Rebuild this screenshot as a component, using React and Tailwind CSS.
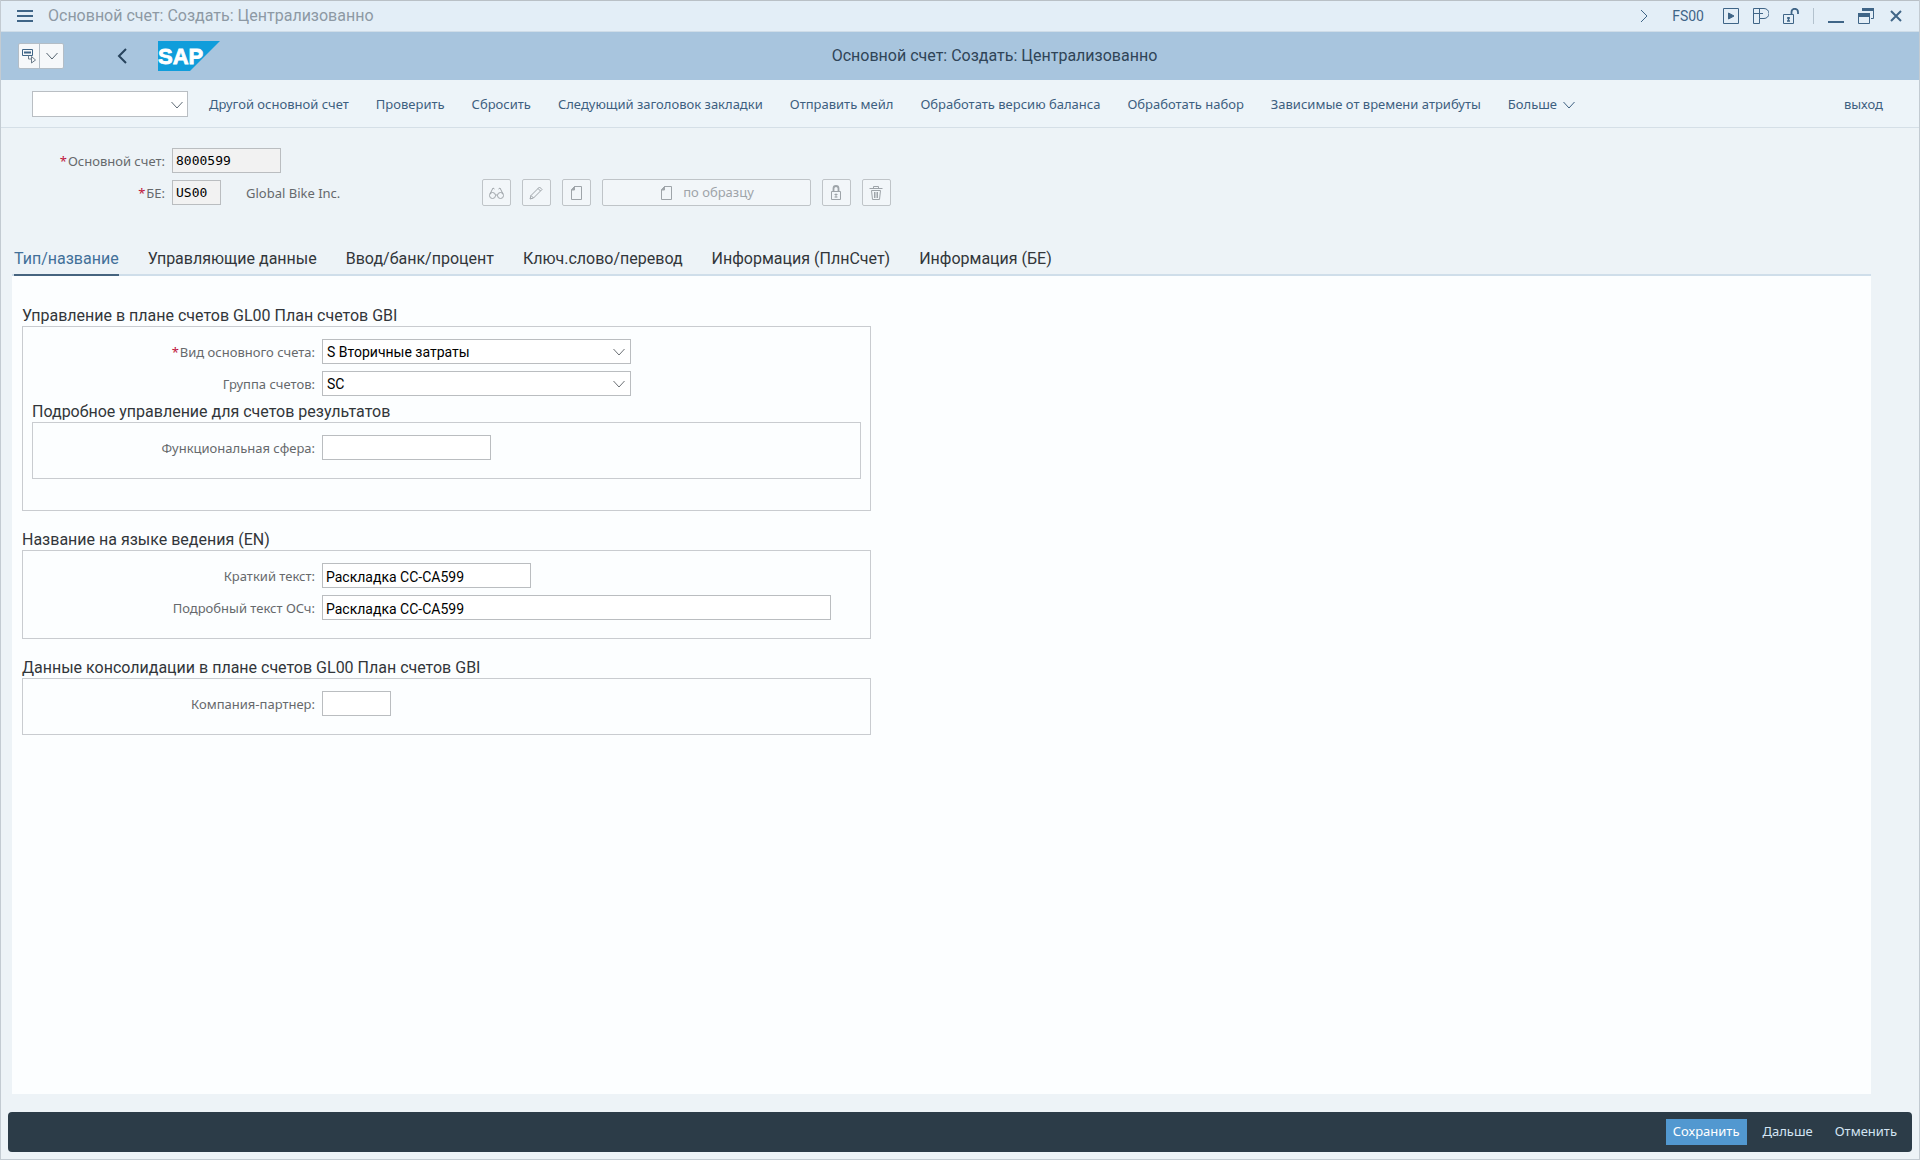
import React from 'react';
import clsx from 'clsx';

const menuItems = [
  'Другой основной счет',
  'Проверить',
  'Сбросить',
  'Следующий заголовок закладки',
  'Отправить мейл',
  'Обработать версию баланса',
  'Обработать набор',
  'Зависимые от времени атрибуты',
];

const tabs = [
  'Тип/название',
  'Управляющие данные',
  'Ввод/банк/процент',
  'Ключ.слово/перевод',
  'Информация (ПлнСчет)',
  'Информация (БЕ)',
];

function Icon({ className, children, size = 16, width = 1 }) {
  return (
    <svg
      className={clsx('shrink-0', className)}
      width={size}
      height={size}
      viewBox={`0 0 ${size} ${size}`}
      fill="none"
      stroke="currentColor"
      strokeWidth={width}
      aria-hidden="true"
    >
      {children}
    </svg>
  );
}

function ChevronDown({ className }) {
  return (
    <Icon size={12} className={className}>
      <path d="M0.5 3l5.5 6 5.5-6" />
    </Icon>
  );
}

function PageIcon() {
  return (
    <Icon>
      <path d="M5.5 1.5h7v13h-10V5z" />
      <path d="M2.5 5l3-3.5V5z" fill="currentColor" />
    </Icon>
  );
}

function SapLogo() {
  return (
    <svg width="62" height="30" viewBox="0 0 62 30" role="img" aria-label="SAP">
      <path d="M0 0h62L32 30H0z" fill="#0f9ddb" />
      <text x="0" y="23" fill="#fff" fontFamily="Liberation Sans, sans-serif" fontWeight="700" fontSize="22" stroke="#fff" strokeWidth="0.8">
        SAP
      </text>
    </svg>
  );
}

function TitleBar() {
  return (
    <div className="flex h-8 items-center border-t border-b border-t-[#b9c0c6] border-b-[#cfdde8] bg-[#e3eef7] pl-4 pr-[15px] text-[#3f6587]">
      <button type="button" aria-label="Меню">
        <Icon width={2}>
          <path d="M0 3h16M0 8h16M0 13h16" />
        </Icon>
      </button>
      <span className="ml-[15px] text-base leading-6 text-[#8d99a4]">Основной счет: Создать: Централизованно</span>
      <div className="ml-auto flex items-center">
        <button type="button" aria-label="Развернуть">
          <Icon>
            <path d="M5 2l6 6-6 6" />
          </Icon>
        </button>
        <span className="ml-5 mr-[19px] text-sm">FS00</span>
        <div className="flex items-center gap-[14px]">
          <button type="button" aria-label="Воспроизвести">
            <Icon>
              <path d="M0.5 0.5h15v15h-15z" />
              <path d="M5.5 5v6L11 8z" fill="currentColor" />
            </Icon>
          </button>
          <button type="button" aria-label="Персонализация">
            <Icon>
              <path d="M0.5 0.5H11a5 5 0 0 1 0 10H6.5v5h-6z" />
              <path d="M0.5 5.5h6v5M6.5 0.5v5H10" />
            </Icon>
          </button>
          <button type="button" aria-label="Разблокировать">
            <Icon>
              <path d="M0.5 6.5h10v9h-10z" />
              <path d="M8.5 6.5V4a3.2 3.2 0 0 1 6.5 0v2" strokeWidth="1.8" />
              <path d="M5.5 9v4M4 10h3M4 13h3" strokeWidth="1.4" />
            </Icon>
          </button>
          <span className="h-4 w-px bg-[#b3c2ce]" />
          <button type="button" aria-label="Свернуть">
            <Icon width={2}>
              <path d="M0 14h16" />
            </Icon>
          </button>
          <button type="button" aria-label="Восстановить">
            <Icon>
              <path d="M4.5 3V0.5h11v10H13" />
              <path d="M4 0h12v3H4z" fill="currentColor" stroke="none" />
              <path d="M0.5 5.5h11v10h-11z" />
              <path d="M0 5h12v4H0z" fill="currentColor" stroke="none" />
            </Icon>
          </button>
          <button type="button" aria-label="Закрыть">
            <Icon width={2}>
              <path d="M3 3l10 10M13 3L3 13" />
            </Icon>
          </button>
        </div>
      </div>
    </div>
  );
}

function Header() {
  return (
    <header className="flex h-12 items-center bg-[#a8c5de] pl-[17px]">
      <div className="flex h-[26px] w-[46px] overflow-hidden rounded-xs border border-[#b3bdc6] bg-[#f6f8fa]">
        <button type="button" aria-label="Службы" className="flex w-[21px] items-center justify-center border-r border-[#b3bdc6] text-[#3f6587]">
          <Icon>
            <path d="M1.5 1.5h10v6h-10z" />
            <path d="M3 4.5h7" strokeWidth="2" />
            <path d="M7.5 7.5V11h3M10.5 8.5l4 3.5-4 3z" stroke="#6d7d8b" />
          </Icon>
        </button>
        <button type="button" aria-label="Список служб" className="flex flex-1 items-center justify-center text-[#55636f]">
          <ChevronDown />
        </button>
      </div>
      <button type="button" aria-label="Назад" className="ml-[50px] text-[#27435c]">
        <Icon width={2}>
          <path d="M12 1L5 8l7 7" />
        </Icon>
      </button>
      <div className="ml-7">
        <SapLogo />
      </div>
      <h1 className="mr-[150px] flex-1 text-center text-base text-[#2f4457]">Основной счет: Создать: Централизованно</h1>
    </header>
  );
}

function Toolbar() {
  return (
    <nav className="flex h-12 items-center border-b border-[#d5dfe7] bg-[#edf4f9] pl-[31px] pr-9 font-['Noto_Sans',sans-serif] text-[13px] text-[#3d5f80]">
      <div className="relative w-[156px]">
        <select aria-label="Команда" className="block h-[26px] w-full appearance-none border border-[#b9bec3] bg-white pl-1" />
        <ChevronDown className="pointer-events-none absolute right-[5px] top-2 text-[#5f6b76]" />
      </div>
      <div className="ml-[21px] flex items-center gap-[27px] whitespace-nowrap pt-0.5">
        {menuItems.map((item) => (
          <button key={item} type="button">{item}</button>
        ))}
        <button type="button" className="flex items-center gap-[6px]">
          Больше
          <ChevronDown />
        </button>
      </div>
      <button type="button" className="ml-auto pt-0.5">выход</button>
    </nav>
  );
}

function Label({ id, required, className, children }) {
  return (
    <label
      htmlFor={id}
      className={clsx("shrink-0 pr-[7px] pt-0.5 text-right font-['Noto_Sans',sans-serif] text-[13px] text-[#66696c]", className)}
    >
      {required && <span className="mr-px text-[#c0143c]">*</span>}
      {children}
    </label>
  );
}

function Field({ id, label, required, labelClass = 'w-[299px]', inputClass, value = '' }) {
  return (
    <div className="flex h-[25px] items-center">
      <Label id={id} required={required} className={labelClass}>{label}</Label>
      <input
        id={id}
        defaultValue={value}
        className={clsx('h-[25px] border border-[#babdc0] bg-white px-[3px] pt-0.5 text-sm text-black', inputClass)}
      />
    </div>
  );
}

function SelectField({ id, label, required, value }) {
  return (
    <div className="flex h-[25px] items-center">
      <Label id={id} required={required} className="w-[299px]">{label}</Label>
      <div className="relative w-[309px]">
        <select id={id} defaultValue={value} className="block h-[25px] w-full appearance-none border border-[#babdc0] bg-white pl-1 text-sm text-black">
          <option>{value}</option>
        </select>
        <ChevronDown className="pointer-events-none absolute right-[6px] top-[7px] text-[#6b7075]" />
      </div>
    </div>
  );
}

function ActionButton({ label, children, className = 'w-[29px]' }) {
  return (
    <button
      type="button"
      disabled
      aria-label={label}
      className={clsx('flex h-[27px] items-center justify-center gap-2 rounded-xs border border-[#bfc4c8] bg-[#f2f6f9] text-[#9ea4a9]', className)}
    >
      {children}
    </button>
  );
}

function KeyFields() {
  const code = "font-['DejaVu_Sans_Mono',monospace] text-[13px] h-[25px] border border-[#babdc0] bg-[#f2f2f2] px-[3px] text-black";
  return (
    <div className="flex flex-col gap-[7px] pt-5">
      <div className="flex h-[25px] items-center">
        <Label id="account" required className="w-[171px]">Основной счет:</Label>
        <input id="account" readOnly value="8000599" className={clsx(code, 'w-[109px]')} />
      </div>
      <div className="flex h-[25px] items-center">
        <Label id="company" required className="w-[171px]">БЕ:</Label>
        <input id="company" readOnly value="US00" className={clsx(code, 'w-[49px]')} />
        <span className="ml-[25px] w-[236px] pt-0.5 font-['Noto_Sans',sans-serif] text-[13px] text-[#66696c]">Global Bike Inc.</span>
        <div className="flex gap-[11px]">
          <ActionButton label="Просмотреть">
            <Icon>
              <circle cx="3.5" cy="10.5" r="3" />
              <circle cx="11.5" cy="10.5" r="3" />
              <path d="M6.5 10h2M1 9l3-6 1.5 1M14 9l-3-6-1.5 1" />
            </Icon>
          </ActionButton>
          <ActionButton label="Изменить">
            <Icon>
              <path d="M1 14l1-3.5L10.500 2l2.500 2.500L4.500 13zM2 10.500L4.500 13M9 3.500L11.500 6" />
            </Icon>
          </ActionButton>
          <ActionButton label="Создать">
            <PageIcon />
          </ActionButton>
          <ActionButton label="по образцу" className="w-[209px]">
            <PageIcon />
            <span className="font-['Noto_Sans',sans-serif] text-[13px]">по образцу</span>
          </ActionButton>
          <ActionButton label="Блокировать">
            <Icon>
              <path d="M2.5 6.5h9v8h-9z" />
              <path d="M4.500 6.500v-3a2.500 2.500 0 0 1 5 0v3" strokeWidth="1.8" />
              <path d="M7 8.5v4M5.5 9.5h3M5.5 12h3" />
            </Icon>
          </ActionButton>
          <ActionButton label="Удалить">
            <Icon>
              <path d="M0.5 3.5h13M4.5 3V1.5h5V3M2.5 5.5l1 9h7l1-9zM5.5 7v6M7 7v6M8.5 7v6" />
            </Icon>
          </ActionButton>
        </div>
      </div>
    </div>
  );
}

function Group({ title, className, boxClass, children }) {
  return (
    <section className={className}>
      <h2 className="pt-0.5 text-base leading-5 text-[#32363a]">{title}</h2>
      <div className={clsx('flex flex-col gap-[7px] border border-[#c9ccd0] pt-3', boxClass)}>{children}</div>
    </section>
  );
}

function AccountForm() {
  return (
    <form className="w-full max-w-[849px] pt-7">
      <Group title="Управление в плане счетов GL00 План счетов GBI" boxClass="pb-[31px]">
        <SelectField id="type" required label="Вид основного счета:" value="S Вторичные затраты" />
        <SelectField id="group" label="Группа счетов:" value="SC" />
        <Group
          title="Подробное управление для счетов результатов"
          className="-mt-[3px] px-[9px]"
          boxClass="pb-[18px]"
        >
          <Field id="area" label="Функциональная сфера:" labelClass="w-[289px]" inputClass="w-[169px]" />
        </Group>
      </Group>
      <Group title="Название на языке ведения (EN)" className="mt-[17px]" boxClass="pb-[18px]">
        <Field id="short" label="Краткий текст:" inputClass="w-[209px]" value="Раскладка CC-CA599" />
        <Field id="long" label="Подробный текст ОСч:" inputClass="w-[509px]" value="Раскладка CC-CA599" />
      </Group>
      <Group title="Данные консолидации в плане счетов GL00 План счетов GBI" className="mt-[17px]" boxClass="pb-[18px]">
        <Field id="partner" label="Компания-партнер:" inputClass="w-[69px]" />
      </Group>
    </form>
  );
}

export default function App() {
  return (
    <div className="flex min-h-screen flex-col border-x border-b border-[#c3cbd2] bg-[#edf3f7] font-[Roboto,sans-serif]">
      <TitleBar />
      <Header />
      <Toolbar />
      <KeyFields />
      <main className="ml-[11px] mr-12 mt-9 flex flex-1 flex-col">
        <div role="tablist" className="flex gap-[29px] border-b-2 border-[#cfdeea] pl-[2px]">
          {tabs.map((tab, i) => (
            <button
              key={tab}
              type="button"
              role="tab"
              aria-selected={i === 0}
              className={clsx(
                '-mb-[2px] h-[35px] whitespace-nowrap border-b-2 pt-0.5 text-base',
                i === 0 ? 'border-[#46647f] text-[#427099]' : 'border-transparent text-[#32363a]'
              )}
            >
              {tab}
            </button>
          ))}
        </div>
        <div className="flex-1 bg-[#fcfeff] pl-[10px] pr-4">
          <AccountForm />
        </div>
      </main>
      <footer className="mx-[7px] mb-[7px] mt-[18px] flex h-10 items-center justify-end rounded-sm bg-[#2c3c48] pr-[15px] font-['Noto_Sans',sans-serif] text-[13px] text-[#d3e4f3]">
        <button type="button" className="h-[26px] bg-[#5298d0] px-[7px] text-white">Сохранить</button>
        <button type="button" className="ml-4">Дальше</button>
        <button type="button" className="ml-[22px]">Отменить</button>
      </footer>
    </div>
  );
}
